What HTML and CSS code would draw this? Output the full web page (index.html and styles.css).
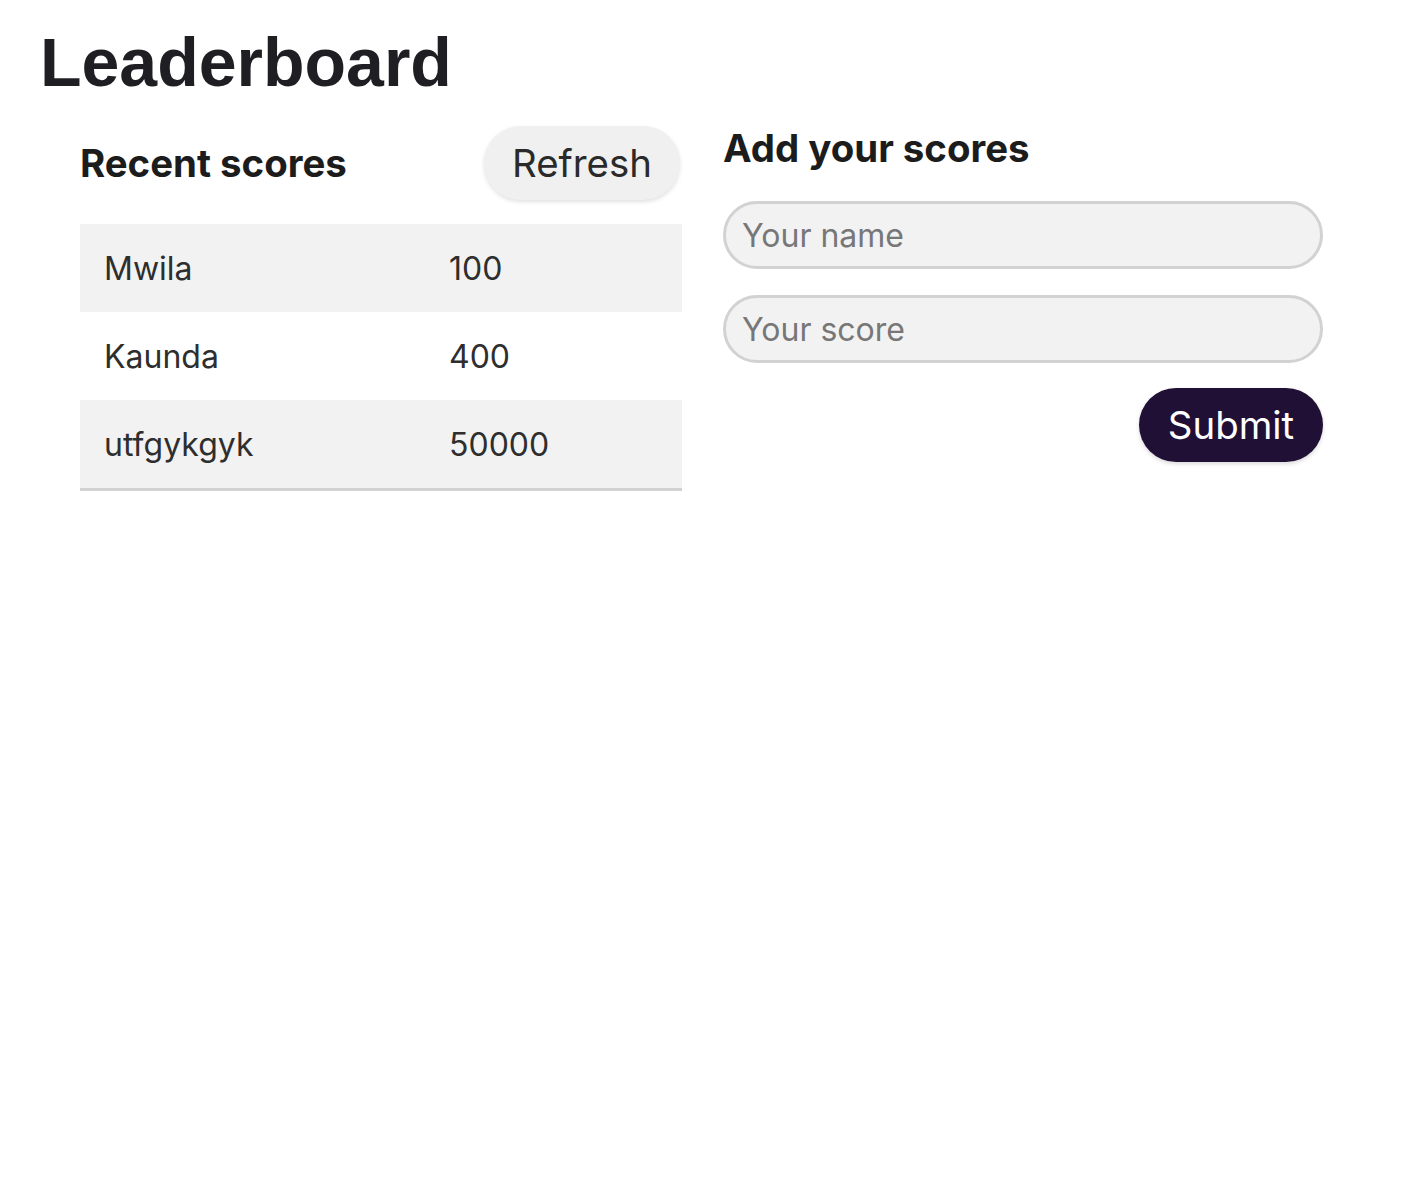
FILE: index.html
```html
<!DOCTYPE html>
<html lang="en">
<head>
<meta charset="utf-8">
<title>Leaderboard</title>
<link rel="stylesheet" href="styles.css">
</head>
<body>
<h1 class="title">Leaderboard</h1>
<main class="layout">
  <section class="recent">
    <div class="recent-head">
      <h2 class="section-title">Recent scores</h2>
      <button class="refresh" type="button">Refresh</button>
    </div>
    <ul class="scores">
      <li class="row"><span class="name">Mwila</span><span class="score">100</span></li>
      <li class="row"><span class="name">Kaunda</span><span class="score">400</span></li>
      <li class="row"><span class="name">utfgykgyk</span><span class="score">50000</span></li>
    </ul>
  </section>
  <section class="add">
    <h2 class="section-title add-title">Add your scores</h2>
    <form class="form">
      <input class="field" type="text" placeholder="Your name">
      <input class="field" type="text" placeholder="Your score">
      <button class="submit" type="button">Submit</button>
    </form>
  </section>
</main>
</body>
</html>
```
FILE: styles.css
```css
* { box-sizing: border-box; }
body {
  margin: 0;
  padding: 0 40px;
  font-family: Inter, "Noto Sans", sans-serif;
  color: #222;
  background: #fff;
}
.title {
  font-family: "Liberation Sans", Arial, sans-serif;
  font-weight: 700;
  font-size: 68px;
  color: #1f1f23;
  margin: 20px 0 0;
  line-height: 84px;
}
.layout {
  display: grid;
  grid-template-columns: 602px 600px;
  column-gap: 41px;
  padding-left: 40px;
  margin-top: 22px;
}
.recent-head {
  display: flex;
  justify-content: space-between;
  align-items: center;
  height: 74px;
  margin-bottom: 24px;
}
.section-title {
  margin: 0;
  font-size: 38.4px;
  font-weight: 700;
  color: #1c1c1c;
}
.refresh {
  font-family: Inter, sans-serif;
  font-size: 38.4px;
  color: #2a2a2a;
  background: #f0f0f0;
  border: none;
  border-radius: 40px;
  width: 196px;
  height: 74px;
  margin-right: 2px;
  box-shadow: 0 2px 4px rgba(0,0,0,0.12);
}
.scores {
  list-style: none;
  margin: 0;
  padding: 0;
  border-bottom: 3px solid #d2d2d2;
}
.row {
  display: grid;
  grid-template-columns: 345px 1fr;
  height: 88px;
  align-items: center;
  padding-left: 24px;
  font-size: 32px;
  color: #2e2e2e;
}
.row:nth-child(odd) { background: #f2f2f2; }
.add-title { margin-top: -1px; line-height: 46px; }
.form {
  display: flex;
  flex-direction: column;
  align-items: flex-end;
  gap: 26px;
  margin-top: 30px;
}
.field {
  width: 100%;
  height: 68px;
  border: 3px solid #d2d2d2;
  border-radius: 40px;
  background: #f2f2f2;
  font-family: Inter, sans-serif;
  font-size: 32px;
  padding: 0 16px;
  color: #333;
}
.field::placeholder { color: #777; }
.submit {
  margin-top: -1px;
  width: 184px;
  height: 74px;
  background: #211036;
  color: #fff;
  border: none;
  border-radius: 40px;
  font-family: Inter, sans-serif;
  font-size: 38.4px;
  box-shadow: 0 2px 4px rgba(0,0,0,0.15);
}
```
